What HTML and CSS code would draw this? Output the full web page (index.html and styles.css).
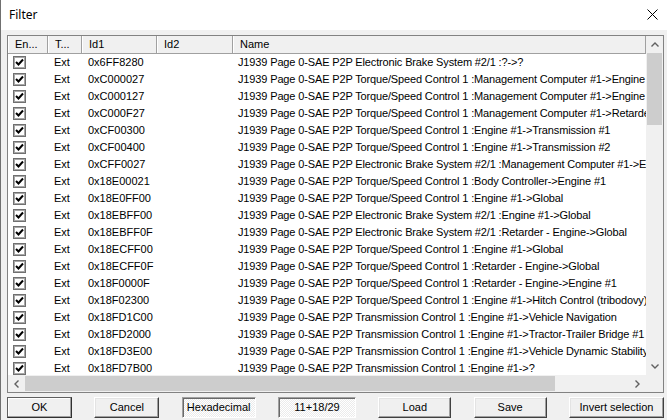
FILE: index.html
```html
<!DOCTYPE html>
<html lang="en">
<head>
  <meta charset="utf-8">
  <title>Filter</title>
  <link rel="stylesheet" href="styles.css">
</head>
<body>
<div class="dialog">
  <div class="titlebar">
    <span class="title">Filter</span>
    <svg class="close" width="11" height="11" viewBox="0 0 11 11"><path d="M0.5 0.5 L10.5 10.5 M10.5 0.5 L0.5 10.5" stroke="#000" stroke-width="1" fill="none"/></svg>
  </div>

  <div class="content">
    <div class="listview">
      <div class="viewport">
        <div class="header">
          <div class="hcell">En...</div>
          <div class="hcell">T...</div>
          <div class="hcell">Id1</div>
          <div class="hcell">Id2</div>
          <div class="hcell">Name</div>
        </div>
        <div id="rows"></div>
      </div>

      <div class="vscroll">
        <div class="arrow"><svg width="8" height="5" viewBox="0 0 8 5"><polyline points="0.5,4.5 4,1 7.5,4.5" fill="none" stroke="#606060" stroke-width="1.4"/></svg></div>
        <div class="vthumb"></div>
        <div class="track"></div>
        <div class="arrow"><svg width="8" height="5" viewBox="0 0 8 5"><polyline points="0.5,0.5 4,4 7.5,0.5" fill="none" stroke="#606060" stroke-width="1.4"/></svg></div>
      </div>

      <div class="hscroll">
        <div class="arrow"><svg width="5" height="8" viewBox="0 0 5 8"><polyline points="4.5,0.5 1,4 4.5,7.5" fill="none" stroke="#606060" stroke-width="1.4"/></svg></div>
        <div class="hthumb"></div>
        <div class="track"></div>
        <div class="arrow"><svg width="5" height="8" viewBox="0 0 5 8"><polyline points="0.5,0.5 4,4 0.5,7.5" fill="none" stroke="#606060" stroke-width="1.4"/></svg></div>
      </div>

      <div class="corner"></div>
    </div>

    <div class="buttons">
      <button class="btn short default">OK</button>
      <button class="btn short">Cancel</button>
      <button class="btn sunken hex">Hexadecimal</button>
      <div class="field sunken">11+18/29</div>
      <button class="btn">Load</button>
      <button class="btn">Save</button>
      <button class="btn wide">Invert selection</button>
    </div>
  </div>
</div>

<script>
// id, name suffix
const entries = [
  ["0x6FF8280", "Electronic Brake System #2/1 :?->?"],
  ["0xC000027", "Torque/Speed Control 1 :Management Computer #1->Engine #1"],
  ["0xC000127", "Torque/Speed Control 1 :Management Computer #1->Engine #2"],
  ["0xC000F27", "Torque/Speed Control 1 :Management Computer #1->Retarder - Engine"],
  ["0xCF00300", "Torque/Speed Control 1 :Engine #1->Transmission #1"],
  ["0xCF00400", "Torque/Speed Control 1 :Engine #1->Transmission #2"],
  ["0xCFF0027", "Electronic Brake System #2/1 :Management Computer #1->Engine #1"],
  ["0x18E00021", "Torque/Speed Control 1 :Body Controller->Engine #1"],
  ["0x18E0FF00", "Torque/Speed Control 1 :Engine #1->Global"],
  ["0x18EBFF00", "Electronic Brake System #2/1 :Engine #1->Global"],
  ["0x18EBFF0F", "Electronic Brake System #2/1 :Retarder - Engine->Global"],
  ["0x18ECFF00", "Torque/Speed Control 1 :Engine #1->Global"],
  ["0x18ECFF0F", "Torque/Speed Control 1 :Retarder - Engine->Global"],
  ["0x18F0000F", "Torque/Speed Control 1 :Retarder - Engine->Engine #1"],
  ["0x18F02300", "Torque/Speed Control 1 :Engine #1->Hitch Control (tribodovy)"],
  ["0x18FD1C00", "Transmission Control 1 :Engine #1->Vehicle Navigation"],
  ["0x18FD2000", "Transmission Control 1 :Engine #1->Tractor-Trailer Bridge #1"],
  ["0x18FD3E00", "Transmission Control 1 :Engine #1->Vehicle Dynamic Stability"],
  ["0x18FD7B00", "Transmission Control 1 :Engine #1->?"]
];

const check = '<svg width="9" height="9" viewBox="0 0 9 9"><polyline points="1,4 3.5,6.5 8,1.5" fill="none" stroke="#000" stroke-width="2"/></svg>';

let html = "";
for (const [id, name] of entries) {
  html += '<div class="row">' +
    '<div class="cell"><span class="check">' + check + '</span></div>' +
    '<div class="cell">Ext</div>' +
    '<div class="cell">' + id + '</div>' +
    '<div class="cell"></div>' +
    '<div class="cell name">J1939 Page 0-SAE P2P ' + name + '</div>' +
    '</div>';
}
document.getElementById("rows").innerHTML = html;
</script>
</body>
</html>
```

FILE: styles.css
```css
html, body {
  margin: 0;
  padding: 0;
}

body {
  background: #f0f0f0;
  font-family: "Liberation Sans", Arial, sans-serif;
  font-size: 11px;
  color: #000;
}

.dialog {
  width: 667px;
  height: 420px;
  box-sizing: border-box;
  border-left: 1px solid #707070;
  display: flex;
  flex-direction: column;
  overflow: hidden;
}

.titlebar {
  height: 30px;
  flex: none;
  background: #fff;
  display: flex;
  align-items: center;
  justify-content: space-between;
  padding: 0 9px 0 8px;
}

.title {
  font-family: "Noto Sans", "Open Sans", sans-serif;
  font-size: 12px;
  margin-top: -1px;
}

.close {
  margin-top: -2px;
}

.content {
  flex: 1;
  padding: 5px 3px 0 6px;
  display: flex;
  flex-direction: column;
  gap: 4px;
}

/* list view */

.listview {
  height: 358px;
  box-sizing: border-box;
  border: 1px solid #828282;
  background: #fff;
  display: grid;
  grid-template-columns: 1fr 17px;
  grid-template-rows: 1fr 17px;
}

.viewport {
  overflow: hidden;
  min-width: 0;
}

.header,
.row {
  display: grid;
  grid-template-columns: 40px 34px 75px 76px 1fr;
  white-space: nowrap;
}

.header {
  height: 18px;
  box-sizing: border-box;
  background: #f0f0f0;
  border-bottom: 1px solid #a0a0a0;
}

.hcell {
  box-sizing: border-box;
  border-left: 1px solid #fff;
  border-right: 1px solid #a0a0a0;
  padding-left: 6px;
  line-height: 17px;
  overflow: hidden;
}

.row {
  height: 17px;
  line-height: 17px;
}

.cell {
  padding-left: 6px;
  overflow: hidden;
}

.cell.name {
  padding-left: 5px;
  letter-spacing: -0.14px;
}

.check {
  display: flex;
  align-items: center;
  justify-content: center;
  width: 13px;
  height: 13px;
  box-sizing: border-box;
  margin: 2px 0 0 -1px;
  border: 1px solid #707070;
  box-shadow: inset 0 0 0 1px #a8a8a8;
  background: #fff;
}

/* scroll bars */

.vscroll,
.hscroll {
  background: #f0f0f0;
  display: flex;
}

.vscroll {
  flex-direction: column;
}

.arrow {
  flex: none;
  width: 17px;
  height: 17px;
  display: flex;
  align-items: center;
  justify-content: center;
}

.track {
  flex: 1;
}

.vthumb {
  height: 72px;
  margin: 0 1px;
  background: #cdcdcd;
}

.hthumb {
  width: 530px;
  margin: 1px 0;
  background: #cdcdcd;
}

.corner {
  background: #f0f0f0;
}

/* bottom buttons */

.buttons {
  height: 21px;
  display: flex;
  justify-content: space-between;
}

.btn,
.field {
  width: 73px;
  height: 21px;
  box-sizing: border-box;
  padding: 0;
  font: inherit;
  color: #000;
  text-align: center;
  line-height: 19px;
  background: #f0f0f0;
  border: 1px solid;
  border-color: #fff #404040 #404040 #fff;
  box-shadow: inset -1px -1px #a0a0a0, inset 1px 1px #e3e3e3;
}

.btn.short {
  width: 65px;
}

.btn.wide {
  width: 95px;
}

.btn.hex {
  width: 74px;
}

.field {
  width: 78px;
}

.btn.default {
  border-color: #606060 #303030 #303030 #606060;
  box-shadow: inset -1px -1px #a0a0a0, inset 1px 1px #fff;
}

.sunken {
  border-color: #a0a0a0 #fff #fff #a0a0a0;
  box-shadow: inset 1px 1px #696969;
  background: repeating-conic-gradient(#fff 0 25%, #ebebeb 0 50%) 0 0 / 2px 2px;
}
```
